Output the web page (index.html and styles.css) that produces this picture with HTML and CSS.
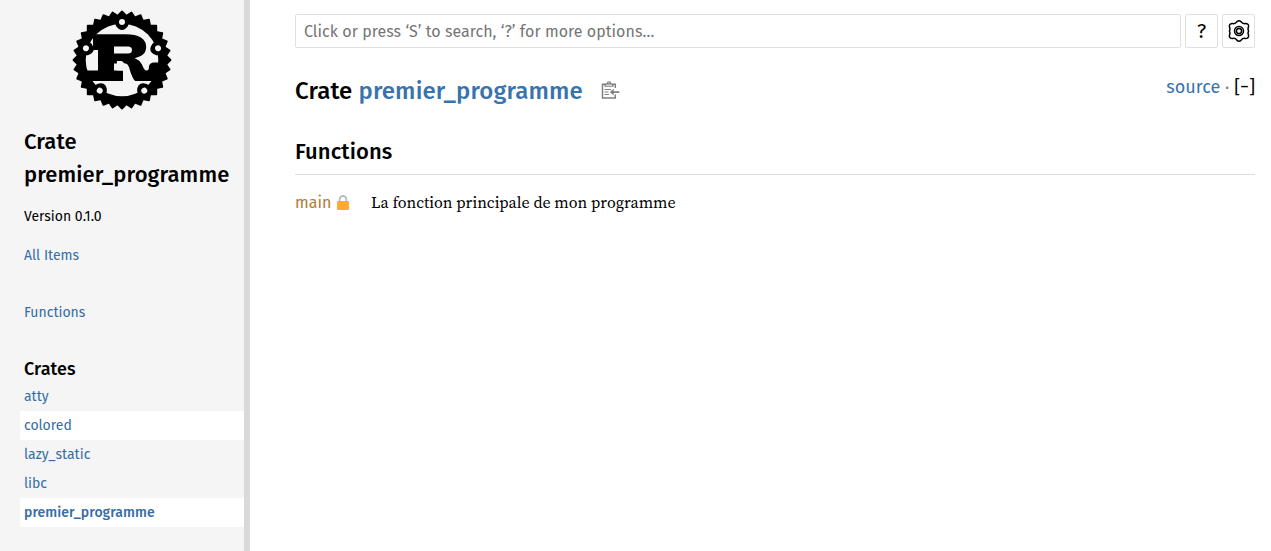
FILE: index.html
```html
<!DOCTYPE html>
<html lang="en">
<head>
  <meta charset="UTF-8">
  <meta name="viewport" content="width=device-width, initial-scale=1.0">
  <title>premier_programme - Rust</title>
  <link rel="stylesheet" href="styles.css">
</head>
<body>

<nav class="sidebar">
  <a class="logo" href="#">
    <svg width="100" height="100" viewBox="-50 -50 100 100">
      <!-- eight squares give the 32 teeth -->
      <g class="teeth">
        <rect id="sq" x="-34.3" y="-34.3" width="68.6" height="68.6" transform="rotate(45)"/>
        <use href="#sq" transform="rotate(11.25)"/>
        <use href="#sq" transform="rotate(22.5)"/>
        <use href="#sq" transform="rotate(33.75)"/>
        <use href="#sq" transform="rotate(45)"/>
        <use href="#sq" transform="rotate(56.25)"/>
        <use href="#sq" transform="rotate(67.5)"/>
        <use href="#sq" transform="rotate(78.75)"/>
      </g>
      <circle class="hole" r="36.3"/>
      <!-- bolts -->
      <g id="bolt">
        <path d="M-7-37L-6-34Q0-26 6-34L7-37Z"/>
        <circle class="hole" cy="-37.9" r="3"/>
      </g>
      <use href="#bolt" transform="rotate(72)"/>
      <use href="#bolt" transform="rotate(144)"/>
      <use href="#bolt" transform="rotate(216)"/>
      <use href="#bolt" transform="rotate(288)"/>
      <text class="logo-letter" transform="translate(-30 20.3) scale(1.2 1)">R</text>
      <!-- slabs and foot joining the letter to the ring -->
      <rect x="-29" y="-25" width="21" height="15"/>
      <rect x="-24" y="-20" width="16" height="35"/>
      <rect x="-37" y="10.5" width="38" height="10.5"/>
      <rect x="-9" y="-21" width="22" height="22"/>
      <path class="hole" d="M-8-13.5H6Q10-13.5 10-10T6-6.5H-8Z"/>
      <path class="hole" d="M-8 3.5H3.5C9 4 8 20 14 21.5H1V10.5H-8Z"/>
      <path d="M7 0H16Q20 3 20.5 6.5Q21 10.5 25 10.5Q27 10.5 27 6Q28 2.5 32 2.5H38V21H14C9 20 10 7 7 4Z"/>
    </svg>
  </a>
  <h2 class="location"><a href="#">Crate premier_programme</a></h2>
  <ul class="block version">
    <li>Version 0.1.0</li>
    <li><a href="#">All Items</a></li>
  </ul>
  <ul class="block sections">
    <li><a href="#">Functions</a></li>
  </ul>
  <h3 class="crates-title">Crates</h3>
  <ul class="block crates">
    <li><a href="#">atty</a></li>
    <li><a class="hovered" href="#">colored</a></li>
    <li><a href="#">lazy_static</a></li>
    <li><a href="#">libc</a></li>
    <li><a class="current" href="#">premier_programme</a></li>
  </ul>
</nav>
<div class="resizer"></div>

<main>
  <form class="search-form">
    <input class="search-input" type="search" placeholder="Click or press ‘S’ to search, ‘?’ for more options…">
    <button class="tool" type="button">?</button>
    <button class="tool" type="button">
      <svg width="22" height="22" viewBox="-11 -11 22 22">
        <g class="wheel">
          <path d="M-2.2-9.1Q0-11.3 2.2-9.1Q3.6-7 6.2-7.4Q9.9-7.5 9.6-4.4Q8.5-2 9.6 0Q8.5 2 9.6 4.4Q9.9 7.5 6.2 7.4Q3.6 7 2.2 9.1Q0 11.3-2.2 9.1Q-3.6 7-6.2 7.4Q-9.9 7.5-9.6 4.4Q-8.5 2-9.6 0Q-8.5-2-9.6-4.4Q-9.9-7.5-6.2-7.4Q-3.6-7-2.2-9.1Z"/>
          <circle r="4.5"/>
          <circle r="2.6"/>
        </g>
      </svg>
    </button>
  </form>

  <div class="main-heading">
    <h1>Crate <a href="#">premier_programme</a></h1>
    <button class="copy-path" type="button">
      <svg width="19" height="18" viewBox="0 0 19 18">
        <path class="clip" d="M14.3 7V3.2H1.5V17H14.3V13.6"/>
        <path d="M3.5 5.8V2.7H5.6Q5.8.3 8 .3T10.4 2.7H12.5V5.8ZM8 1.5A1 1 0 0 0 7 2.6H9A1 1 0 0 0 8 1.5Z"/>
        <path class="paper" d="M5 3.7H11V4.7H5Z"/>
        <path d="M3.5 8H10V9H3.5ZM3.5 10.5H7.5V11.5H3.5ZM3.5 13H8V14H3.5ZM8.8 11.1L12.7 7.8V10.2H18.3V12H12.7V14.4Z"/>
      </svg>
    </button>
    <span class="out-of-band"><a href="#">source</a> · <a class="toggle" href="#">[−]</a></span>
  </div>

  <h2 class="section-header">Functions</h2>
  <div class="item-table">
    <div class="item-name">
      <a href="#">main</a>
      <svg width="12" height="15" viewBox="0 0 12 15">
        <path class="shackle" d="M2.6 7V4.4a3.4 3.4 0 0 1 6.8 0V7"/>
        <rect class="lock" y="6" width="12" height="9" rx="1.3"/>
      </svg>
    </div>
    <div class="item-desc">La fonction principale de mon programme</div>
  </div>
</main>

</body>
</html>
```
FILE: styles.css
```css
* {
  box-sizing: border-box;
}

body {
  margin: 0;
  height: 100vh;
  display: flex;
  overflow: hidden;
  background: #fff;
  color: #000;
  font-family: "Fira Sans", "Noto Sans", sans-serif;
  font-size: 16px;
}

a {
  color: #3873ad;
  text-decoration: none;
}

h1, h2, h3 {
  margin: 0;
  font-weight: 500;
}

ul {
  list-style: none;
  margin: 0;
  padding: 0;
}

/* Sidebar */
.sidebar {
  width: 244px;
  flex: none;
  background: #f5f5f5;
}

.sidebar a {
  color: #356da4;
}

.resizer {
  width: 6px;
  flex: none;
  background: #d9d9d9;
}

.logo {
  display: flex;
  justify-content: center;
  padding-top: 10px;
}

.teeth {
  stroke: #000;
  stroke-width: 1.8;
  stroke-linejoin: round;
}

.hole {
  fill: #f5f5f5;
}

.logo-letter {
  font-family: "DejaVu Serif", serif;
  font-weight: bold;
  font-size: 61px;
  fill: #000;
  stroke: #000;
  stroke-width: 1.5;
}

.location {
  padding: 15px 0 0 24px;
  font-size: 22px;
  line-height: 33px;
  letter-spacing: 0.1px;
}

.sidebar .location a {
  color: #000;
}

.block {
  font-size: 14px;
  line-height: 19px;
}

.version {
  padding: 16px 0 0 24px;
}

.version li {
  margin-bottom: 20px;
}

.sections {
  padding: 18px 0 0 24px;
}

.crates-title {
  padding: 34px 0 0 24px;
  font-size: 18px;
  line-height: 26px;
  letter-spacing: 0.1px;
}

.crates {
  padding-left: 20px;
}

.crates a {
  display: block;
  height: 29px;
  padding: 5px 4px;
}

.crates .hovered,
.crates .current {
  background: #fff;
}

.crates .current {
  font-weight: 500;
  letter-spacing: 0.06px;
}

/* Content */
main {
  flex: 1;
  padding: 14px 16px 0 45px;
}

.search-form {
  display: flex;
  gap: 4px;
  height: 34px;
}

.search-input {
  flex: 1;
  padding: 0 8px;
  border: 1px solid #e0e0e0;
  border-radius: 2px;
  background: #fff;
  font: inherit;
  letter-spacing: 0.04px;
}

.search-input::placeholder {
  color: #757575;
}

.tool {
  width: 33px;
  padding: 0;
  display: flex;
  align-items: center;
  justify-content: center;
  border: 1px solid #e0e0e0;
  border-radius: 2px;
  background: #fff;
  color: #000;
  font: 20px "Fira Sans", "Noto Sans", sans-serif;
}

.wheel {
  fill: none;
  stroke: #000;
  stroke-width: 1.5;
}

.main-heading {
  display: flex;
  align-items: flex-start;
  padding-top: 25px;
}

h1 {
  font-size: 24px;
  line-height: 36px;
  letter-spacing: 0.12px;
}

.copy-path {
  margin: 8px 0 0 18px;
  padding: 0;
  height: 18px;
  border: 0;
  background: none;
  fill: #808080;
}

.clip {
  fill: none;
  stroke: #808080;
  stroke-width: 1.5;
}

.paper {
  fill: #fff;
}

.out-of-band {
  margin-left: auto;
  padding-top: 1px;
  font-size: 18px;
  line-height: 27px;
  letter-spacing: 0.04px;
  color: #808080;
}

.toggle {
  color: #000;
}

.section-header {
  margin-top: 24px;
  height: 42px;
  border-bottom: 1px solid #ddd;
  font-size: 22px;
  line-height: 38px;
  letter-spacing: 0.1px;
}

.item-table {
  display: flex;
  padding-top: 16px;
  line-height: 24px;
}

.item-name {
  width: 76px;
  display: flex;
  gap: 6px;
  align-items: center;
}

.item-name svg {
  margin-bottom: 1px;
}

.item-name a {
  color: #ad7c37;
}

.shackle {
  fill: none;
  stroke: #b0bec5;
  stroke-width: 1.8;
}

.lock {
  fill: #ffa931;
}

.item-desc {
  font-family: "Source Serif 4", "Liberation Serif", serif;
  line-height: 22px;
}
```
